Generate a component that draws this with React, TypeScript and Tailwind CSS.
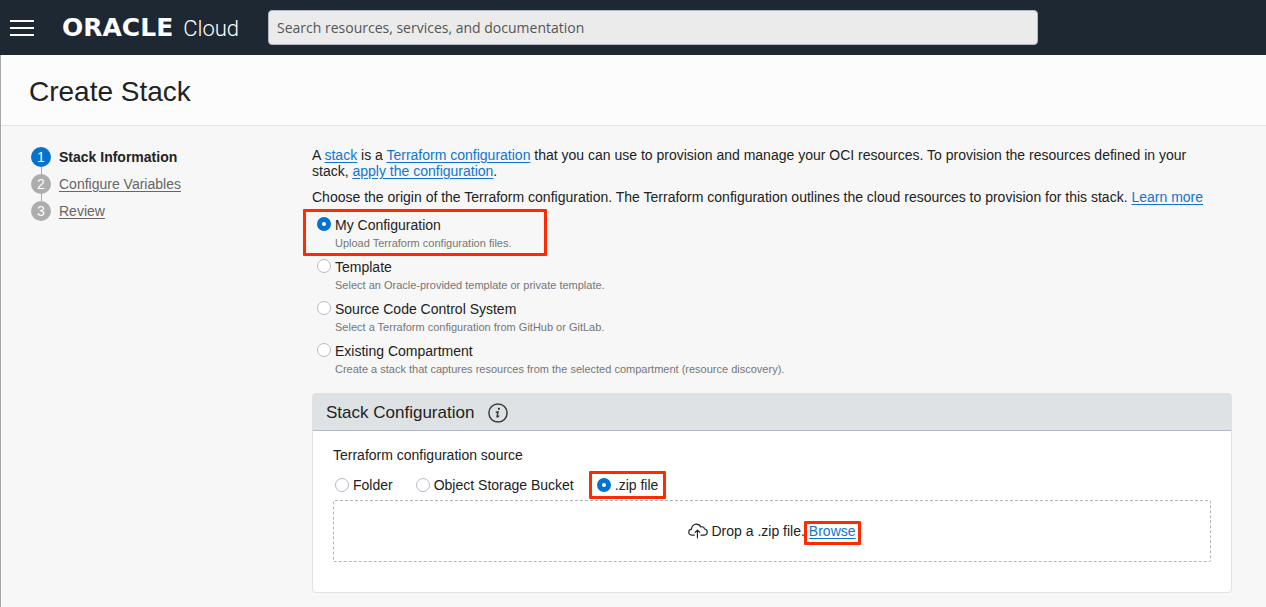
import { useState } from 'react';
import type { ReactNode } from 'react';

const steps = ['Stack Information', 'Configure Variables', 'Review'];

const origins = [
  { id: 'my-configuration', title: 'My Configuration', note: 'Upload Terraform configuration files.' },
  { id: 'template', title: 'Template', note: 'Select an Oracle-provided template or private template.' },
  { id: 'source-control', title: 'Source Code Control System', note: 'Select a Terraform configuration from GitHub or GitLab.' },
  {
    id: 'existing-compartment',
    title: 'Existing Compartment',
    note: 'Create a stack that captures resources from the selected compartment (resource discovery).',
  },
];

const sources = [
  { id: 'folder', title: 'Folder' },
  { id: 'bucket', title: 'Object Storage Bucket' },
  { id: 'zip', title: '.zip file' },
];

const radioClass =
  'm-0 size-[14px] shrink-0 appearance-none rounded-full border border-[#b4bac6] bg-white checked:border-[5px] checked:border-[#0572ce]';

function Link({ children }: { children: ReactNode }) {
  return (
    <a href="#" className="text-[#0f76d0] underline underline-offset-2">
      {children}
    </a>
  );
}

function Highlight({ className }: { className: string }) {
  return <span aria-hidden="true" className={`pointer-events-none absolute rounded-[1px] border-3 border-[#ff2a00] ${className}`} />;
}

function CloudUpload() {
  return (
    <svg width="20" height="16" viewBox="0 0 21 16" fill="none" stroke="#222" strokeWidth="1.2" strokeLinecap="round" strokeLinejoin="round" aria-hidden="true">
      <path d="M6.5 12.4H4.4C2.3 12.4 .8 11 .8 9.2 .8 7.5 2.1 6.2 3.7 6 3.7 3.1 5.8 .8 8.7 .8c2.1 0 3.9 1.1 4.7 3 .4-.2.8-.3 1.3-.3 1.4 0 2.4 1 2.6 2.4 1.7.1 2.9 1.5 2.9 3.2 0 1.8-1.4 3.3-3.3 3.3h-3.2" />
      <path d="M9.9 15.2V7M7.4 9.5 9.9 7l2.5 2.5" />
    </svg>
  );
}

function InfoIcon() {
  return (
    <svg width="20" height="20" viewBox="0 0 20 20" fill="none" stroke="#3c3c3c" strokeLinecap="round" strokeLinejoin="round" aria-hidden="true">
      <circle cx="10" cy="10" r="9.1" strokeWidth="1.5" />
      <circle cx="10.9" cy="5.8" r="1.1" fill="#333" stroke="none" />
      <path d="M8.3 9.2 10.2 8.7 9 13.3c-.1.6.3.8.8.5l1-.8" strokeWidth="1.4" />
    </svg>
  );
}

function TopBar() {
  return (
    <header className="flex h-[55px] items-center bg-[#1e2832] pl-[10px] pr-[228px]">
      <button type="button" aria-label="Open navigation menu" className="flex w-6 shrink-0 flex-col gap-[5px]">
        <span className="h-[2px] bg-white" />
        <span className="h-[2px] bg-white" />
        <span className="h-[2px] bg-white" />
      </button>
      <a href="#" className="ml-7 flex w-[206px] shrink-0 items-baseline gap-[10px] whitespace-nowrap pt-[2px] text-white">
        <span className="font-['DejaVu_Sans',sans-serif] text-[25px] font-bold leading-7">ORACLE</span>
        <span className="font-[Roboto,sans-serif] text-[22px] font-light leading-7">Cloud</span>
      </a>
      <input
        type="search"
        aria-label="Search"
        placeholder="Search resources, services, and documentation"
        className="h-[35px] min-w-0 flex-1 rounded-[4px] border border-[#b4b9c4] bg-[#ebebeb] px-2 font-['Open_Sans',sans-serif] text-[14px] text-[#222] placeholder:text-[#555]"
      />
    </header>
  );
}

function Steps() {
  return (
    <nav aria-label="Steps" className="w-[311px] shrink-0 pl-[30px] pt-[21px]">
      <ol className="flex flex-col gap-[7px]">
        {steps.map((step, i) => (
          <li key={step} className="relative flex h-5 items-center gap-2">
            {i < steps.length - 1 && <span className="absolute left-[10px] top-5 h-[7px] w-px bg-[#aaa]" />}
            <span
              className={
                i === 0
                  ? 'flex size-5 items-center justify-center rounded-full bg-[#0572ce] text-white'
                  : 'flex size-5 items-center justify-center rounded-full bg-[#adadad] text-white'
              }
            >
              {i + 1}
            </span>
            {i === 0 ? (
              <span className="font-bold" aria-current="step">{step}</span>
            ) : (
              <a href="#" className="text-[#666] underline underline-offset-2">{step}</a>
            )}
          </li>
        ))}
      </ol>
    </nav>
  );
}

export default function App() {
  const [origin, setOrigin] = useState('my-configuration');
  const [source, setSource] = useState('zip');

  return (
    <div className="flex min-h-screen flex-col bg-[#f7f7f7] font-['Liberation_Sans',Arial,sans-serif] text-[14px] leading-4 text-[#222]">
      <TopBar />
      <div className="flex flex-1 flex-col border-l border-[#a8a8a8]">
        <div className="border-b border-[#e3e3e3] bg-[#fcfcfc] px-7 pb-[17px] pt-[21px]">
          <h1 className="text-[28px] leading-8">Create Stack</h1>
        </div>
        <div className="flex flex-1">
          <Steps />
          <main className="min-w-0 flex-1 pb-[14px] pr-[34px] pt-[21px]">
            <p className="pr-5">
              A <Link>stack</Link> is a <Link>Terraform configuration</Link> that you can use to provision and manage your OCI resources. To provision
              the resources defined in your stack, <Link>apply the configuration</Link>.
            </p>
            <p id="origin-prompt" className="mt-[10px]">
              Choose the origin of the Terraform configuration. The Terraform configuration outlines the cloud resources to provision for this stack.{' '}
              <Link>Learn more</Link>
            </p>

            <div role="radiogroup" aria-labelledby="origin-prompt" className="mt-3 flex flex-col gap-2 pl-[5px]">
              {origins.map((o, i) => (
                <div key={o.id} className="relative flex items-start gap-1">
                  {i === 0 && <Highlight className="-left-[14px] -top-2 h-[47px] w-[244px]" />}
                  <input type="radio" id={o.id} name="origin" checked={origin === o.id} onChange={() => setOrigin(o.id)} className={radioClass} />
                  <div>
                    <label htmlFor={o.id} className="block">{o.title}</label>
                    <p className="mt-[2px] text-[11px] text-[#767676]">{o.note}</p>
                  </div>
                </div>
              ))}
            </div>

            <section className="mt-4 rounded-[4px] border border-[#dfe1e5] bg-white">
              <div className="flex h-[37px] items-center gap-[14px] border-b border-[#b0b9c4] bg-[#dee2e5] px-[13px] pt-[2px]">
                <h2 className="text-[17px] leading-5">Stack Configuration</h2>
                <button type="button" aria-label="About stack configuration">
                  <InfoIcon />
                </button>
              </div>
              <div className="px-5 pb-[30px] pt-4">
                <fieldset>
                  <legend>Terraform configuration source</legend>
                  <div className="flex flex-wrap gap-[23px] pb-[7px] pl-[2px] pt-[14px]">
                    {sources.map((s) => (
                      <div key={s.id} className="relative flex items-center gap-1">
                        {s.id === 'zip' && <Highlight className="-left-2 -right-2 -top-[6px] h-7" />}
                        <input type="radio" id={s.id} name="source" checked={source === s.id} onChange={() => setSource(s.id)} className={radioClass} />
                        <label htmlFor={s.id}>{s.title}</label>
                      </div>
                    ))}
                  </div>
                </fieldset>
                <div className="flex h-[62px] items-center justify-center rounded-[2px] border border-dashed border-[#b0b6be]">
                  <CloudUpload />
                  <span className="ml-[3px]">Drop a .zip file.</span>
                  <button type="button" className="relative ml-1 text-[#0f76d0] underline underline-offset-2">
                    Browse
                    <Highlight className="-bottom-[6px] -left-[5px] -right-[5px] -top-[2px]" />
                  </button>
                </div>
              </div>
            </section>
          </main>
        </div>
      </div>
    </div>
  );
}
